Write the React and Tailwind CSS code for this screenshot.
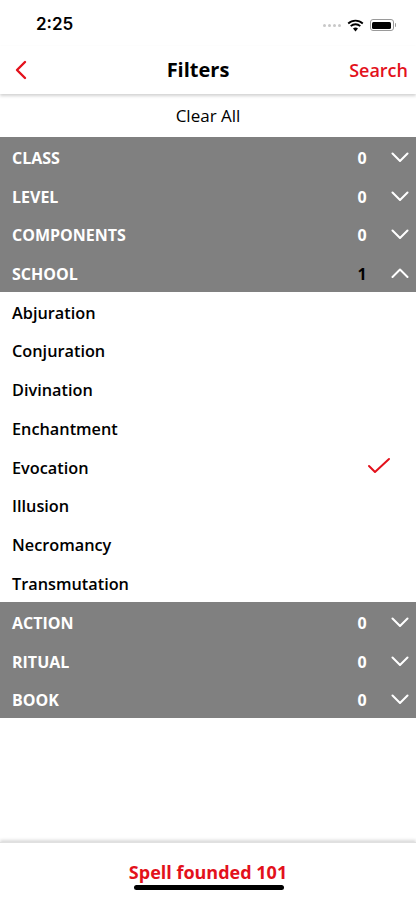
import React from "react";

const RED = "text-[#e3111b]";

function Chevron({ up }) {
  return (
    <svg width="18" height="10" viewBox="0 0 18 10" fill="none" stroke="white" strokeWidth="2" strokeLinecap="round" strokeLinejoin="round">
      {up ? <path d="M1.5 9 L9 1.5 L16.5 9" /> : <path d="M1.5 1.5 L9 9 L16.5 1.5" />}
    </svg>
  );
}

function Header({ label, count, up, dark }) {
  return (
    <div className="h-[38.75px] flex items-center bg-[#808080] pl-[12px] pt-[3px]">
      <span className="flex-1 text-white font-bold text-[16px]">{label}</span>
      <span className={`w-[20px] text-center font-bold text-[16px] ${dark ? "text-black" : "text-white"}`}>{count}</span>
      <span className="w-[32px] ml-[12px] flex justify-center -mt-[2px]">
        <Chevron up={up} />
      </span>
    </div>
  );
}

function Item({ label, checked }) {
  return (
    <div className="h-[38.75px] flex items-center pl-[12px] pr-[25px] pt-[3px] bg-white">
      <span className="flex-1 text-black font-semibold text-[16.3px]">{label}</span>
      {checked && (
        <svg width="24" height="18" viewBox="0 0 24 18" fill="none" stroke="#e3111b" strokeWidth="2" strokeLinecap="round" strokeLinejoin="round" className="-mt-[3px]">
          <path d="M2 9 L8 15 L22 2" />
        </svg>
      )}
    </div>
  );
}

export default function App() {
  return (
    <div className="w-[416px] h-[900px] bg-white flex flex-col relative overflow-hidden" style={{ fontFamily: '"Open Sans", "Liberation Sans", sans-serif' }}>
      {/* status bar */}
      <div className="h-[46px] flex items-center px-[36px] pt-[4px] shrink-0">
        <span className="flex-1 text-[17px] font-semibold text-black" style={{ fontFamily: 'Inter, "Liberation Sans", sans-serif' }}>2:25</span>
        <div className="flex items-center gap-[6px] -mr-[16px]">
          <div className="flex gap-[2px]">
            <span className="w-[3px] h-[3px] rounded-full bg-[#c8c8c8]" />
            <span className="w-[3px] h-[3px] rounded-full bg-[#c8c8c8]" />
            <span className="w-[3px] h-[3px] rounded-full bg-[#c8c8c8]" />
            <span className="w-[3px] h-[3px] rounded-full bg-[#c8c8c8]" />
          </div>
          <svg width="17" height="13" viewBox="0 0 17 13">
            <path d="M8.5 12.5 L6 9.6 A3.6 3.6 0 0 1 11 9.6 Z" fill="black" />
            <path d="M3.7 7.2 A6.9 6.9 0 0 1 13.3 7.2" stroke="black" strokeWidth="1.8" fill="none" />
            <path d="M1.2 4.5 A10.6 10.6 0 0 1 15.8 4.5" stroke="black" strokeWidth="1.8" fill="none" />
          </svg>
          <div className="flex items-center">
            <div className="w-[24px] h-[12px] rounded-[3px] border border-[#9a9a9a] p-[1.5px]">
              <div className="w-full h-full rounded-[1.5px] bg-black" />
            </div>
            <div className="w-[1.5px] h-[4px] bg-[#9a9a9a] ml-[1px] rounded-r" />
          </div>
        </div>
      </div>
      {/* nav bar */}
      <div className="h-[48px] flex items-center relative shrink-0 shadow-[0_2px_3px_rgba(0,0,0,0.18)] z-10">
        <div className="w-[60px] pl-[15px] flex items-center">
          <svg width="12" height="20" viewBox="0 0 12 20" fill="none" stroke="#e3111b" strokeWidth="2.4" strokeLinecap="round" strokeLinejoin="round">
            <path d="M10 2 L2 10 L10 18" />
          </svg>
        </div>
        <div className="flex-1 text-center text-[20px] font-bold text-black">Filters</div>
        <div className={`w-[80px] text-right pr-[8px] text-[18px] font-semibold ${RED}`}>Search</div>
      </div>
      {/* clear all */}
      <div className="h-[43px] flex items-center justify-center shrink-0 text-[17px] font-medium text-black">Clear All</div>
      {/* list */}
      <div className="flex flex-col shrink-0">
        <Header label="CLASS" count="0" />
        <Header label="LEVEL" count="0" />
        <Header label="COMPONENTS" count="0" />
        <Header label="SCHOOL" count="1" up dark />
        <Item label="Abjuration" />
        <Item label="Conjuration" />
        <Item label="Divination" />
        <Item label="Enchantment" />
        <Item label="Evocation" checked />
        <Item label="Illusion" />
        <Item label="Necromancy" />
        <Item label="Transmutation" />
        <Header label="ACTION" count="0" />
        <Header label="RITUAL" count="0" />
        <Header label="BOOK" count="0" />
      </div>
      <div className="flex-1" />
      {/* bottom bar */}
      <div className="h-[58px] shrink-0 flex items-start justify-center pt-[16px] shadow-[0_-2px_3px_rgba(0,0,0,0.15)] border-t border-[#e0e0e0]">
        <span className={`text-[18px] font-bold ${RED}`}>Spell founded 101</span>
      </div>
      <div className="absolute left-[134px] top-[885px] w-[150px] h-[5px] rounded-full bg-black" />
    </div>
  );
}
